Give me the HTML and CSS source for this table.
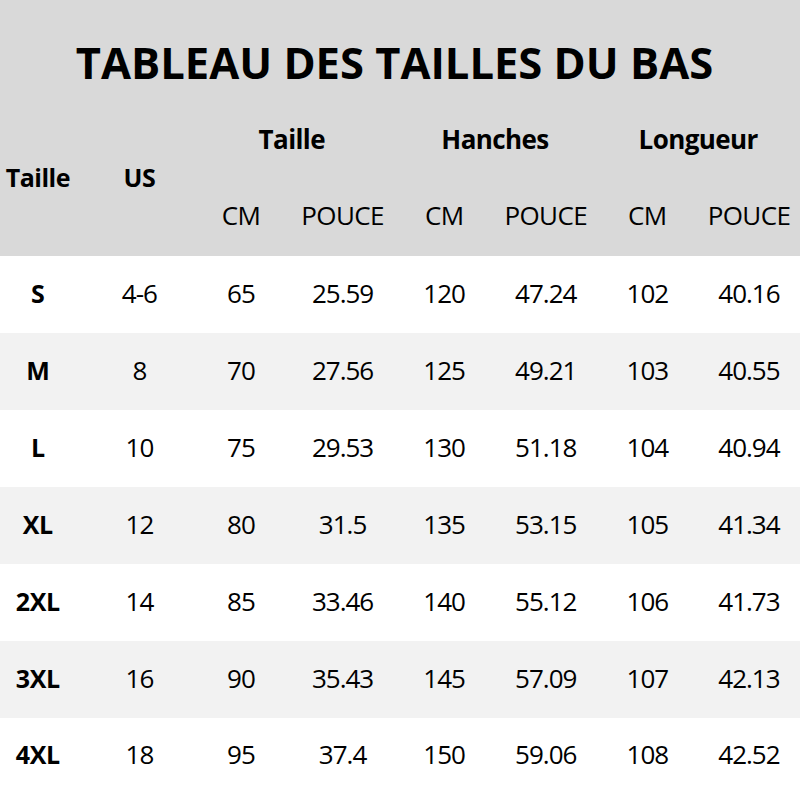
FILE: index.html
```html
<!DOCTYPE html>
<html lang="fr">
<head>
<meta charset="utf-8">
<title>Tableau des tailles du bas</title>
<link rel="stylesheet" href="styles.css">
</head>
<body>
<div class="page">
  <header class="head">
    <h1 class="title">TABLEAU DES TAILLES DU BAS</h1>
    <div class="grid hgrid">
      <div class="rowhead c1">Taille</div>
      <div class="rowhead c2">US</div>
      <div class="group g1">Taille</div>
      <div class="group g2">Hanches</div>
      <div class="group g3">Longueur</div>
      <div class="sub s1">CM</div>
      <div class="sub s2">POUCE</div>
      <div class="sub s3">CM</div>
      <div class="sub s4">POUCE</div>
      <div class="sub s5">CM</div>
      <div class="sub s6">POUCE</div>
    </div>
  </header>
  <div class="body">
    <div class="grid row"><b>S</b><span>4-6</span><span>65</span><span>25.59</span><span>120</span><span>47.24</span><span>102</span><span>40.16</span></div>
    <div class="grid row alt"><b>M</b><span>8</span><span>70</span><span>27.56</span><span>125</span><span>49.21</span><span>103</span><span>40.55</span></div>
    <div class="grid row"><b>L</b><span>10</span><span>75</span><span>29.53</span><span>130</span><span>51.18</span><span>104</span><span>40.94</span></div>
    <div class="grid row alt"><b>XL</b><span>12</span><span>80</span><span>31.5</span><span>135</span><span>53.15</span><span>105</span><span>41.34</span></div>
    <div class="grid row"><b>2XL</b><span>14</span><span>85</span><span>33.46</span><span>140</span><span>55.12</span><span>106</span><span>41.73</span></div>
    <div class="grid row alt"><b>3XL</b><span>16</span><span>90</span><span>35.43</span><span>145</span><span>57.09</span><span>107</span><span>42.13</span></div>
    <div class="grid row last"><b>4XL</b><span>18</span><span>95</span><span>37.4</span><span>150</span><span>59.06</span><span>108</span><span>42.52</span></div>
  </div>
</div>
</body>
</html>
```

FILE: styles.css
```css
html, body {
  margin: 0;
  padding: 0;
}
body {
  width: 800px;
  height: 800px;
  overflow: hidden;
  background: #ffffff;
  color: #000000;
  font-family: "Open Sans", "Noto Sans", sans-serif;
}
.page {
  width: 800px;
  overflow: hidden;
}
.head {
  background: #d9d9d9;
  height: 256px;
  box-sizing: border-box;
  padding-top: 33px;
}
.title {
  margin: 0;
  text-align: center;
  font-size: 43.5px;
  line-height: 60px;
  font-weight: 700;
  letter-spacing: 0;
  padding-right: 11px;
}
.grid {
  display: grid;
  grid-template-columns: repeat(8, 101.6px);
  width: 813px;
  margin-left: -13px;
}
.hgrid {
  margin-top: 26px;
  grid-template-rows: 40px 36px 40px;
  align-items: center;
  justify-items: center;
}
.rowhead {
  grid-row: 2;
  font-weight: 700;
  font-size: 25px;
  letter-spacing: -0.5px;
}
.c1 { grid-column: 1; }
.c2 { grid-column: 2; }
.group {
  grid-row: 1;
  font-weight: 700;
  font-size: 26px;
  letter-spacing: -0.6px;
}
.g1 { grid-column: 3 / span 2; }
.g2 { grid-column: 5 / span 2; }
.g3 { grid-column: 7 / span 2; }
.sub {
  grid-row: 3;
  font-size: 26px;
  letter-spacing: -0.6px;
}
.s1 { grid-column: 3; }
.s2 { grid-column: 4; }
.s3 { grid-column: 5; }
.s4 { grid-column: 6; }
.s5 { grid-column: 7; }
.s6 { grid-column: 8; }
.row {
  height: 77px;
  box-sizing: border-box;
  padding-bottom: 4px;
  align-items: center;
  justify-items: center;
  font-size: 26px;
  letter-spacing: -1px;
}
.row b {
  font-weight: 700;
  font-size: 25px;
  letter-spacing: -0.3px;
}
.alt {
  background: #f2f2f2;
}
.last {
  height: 82px;
  padding-bottom: 10px;
}
```
